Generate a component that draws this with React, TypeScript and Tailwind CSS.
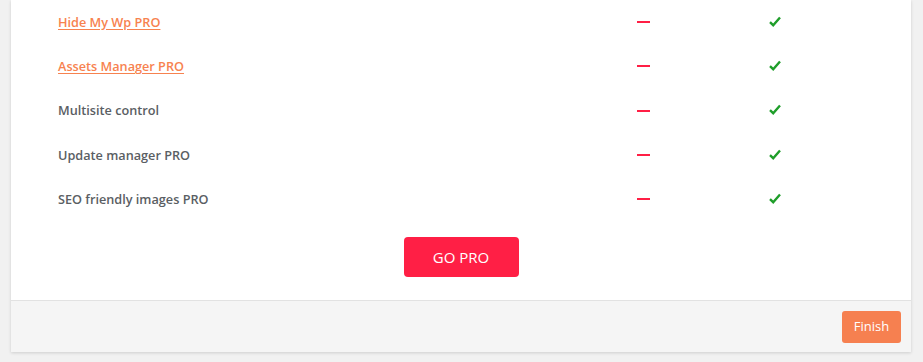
import React from "react";

type Row = { label: string; link?: boolean };

const rows: Row[] = [
  { label: "Hide My Wp PRO", link: true },
  { label: "Assets Manager PRO", link: true },
  { label: "Multisite control" },
  { label: "Update manager PRO" },
  { label: "SEO friendly images PRO" },
];

function Dash() {
  return <span className="block w-[13px] h-[2px] bg-[#ff1f45]" />;
}

function Check() {
  return (
    <svg width="12" height="11" viewBox="0 0 12 11" className="block -mt-[2px]">
      <path d="M1 6.2 L4.2 9.2 L11 1.5" fill="none" stroke="#1f9e2a" strokeWidth="2.4" />
    </svg>
  );
}

export default function App() {
  return (
    <div className="min-h-[362px] bg-[#f1f1f1] pl-[11px] pr-[12px] font-['Open_Sans',sans-serif]">
      <div className="bg-white shadow-[0_1px_3px_rgba(0,0,0,0.15)]">
        <div className="pl-[47px]">
          {rows.map((r) => (
            <div key={r.label} className="grid grid-cols-[520px_131px_131px] items-center h-[44.3px]">
              <div className="text-[12.7px] font-semibold leading-none">
                {r.link ? (
                  <a href="#" className="text-[#f7824f] underline underline-offset-2">
                    {r.label}
                  </a>
                ) : (
                  <span className="text-[#5a5e63]">{r.label}</span>
                )}
              </div>
              <div className="flex justify-center">
                <Dash />
              </div>
              <div className="flex justify-center">
                <Check />
              </div>
            </div>
          ))}
        </div>
        <div className="flex justify-center pt-[16px] pb-[23px]">
          <button className="w-[115px] h-[40px] rounded-[4px] bg-[#ff1f45] text-white text-[15px]">
            GO PRO
          </button>
        </div>
        <div className="flex justify-end border-t border-[#e2e2e2] bg-[#f5f5f5] h-[52px] items-center pr-[10px]">
          <button className="w-[59px] h-[32px] rounded-[3px] bg-[#f68050] text-white text-[13px]">
            Finish
          </button>
        </div>
      </div>
    </div>
  );
}
